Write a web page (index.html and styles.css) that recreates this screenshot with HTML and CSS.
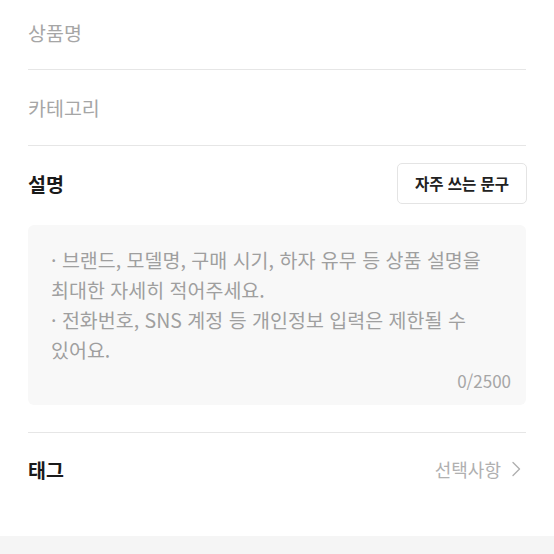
FILE: index.html
```html
<!DOCTYPE html>
<html lang="ko">

<head>
    <meta charset="UTF-8">
    <meta name="viewport" content="width=device-width, initial-scale=1.0">
    <title>상품 등록</title>
    <link rel="stylesheet" href="styles.css">
</head>

<body>
    <div class="form-container">
        <!-- 상품명 / 카테고리 -->
        <div class="field field-first">상품명</div>
        <div class="field">카테고리</div>

        <!-- 설명 -->
        <div class="desc-head">
            <span class="label">설명</span>
            <button type="button" class="phrase-btn">자주 쓰는 문구</button>
        </div>
        <div class="desc-box">
            <p class="desc-hint">· 브랜드, 모델명, 구매 시기, 하자 유무 등 상품 설명을<br>최대한 자세히 적어주세요.<br>· 전화번호, SNS 계정 등 개인정보 입력은 제한될 수<br>있어요.</p>
            <div class="counter">0/2500</div>
        </div>

        <!-- 태그 -->
        <div class="tag-row">
            <span class="label">태그</span>
            <span class="optional">선택사항
                <svg width="10" height="16" viewBox="0 0 10 16"><path d="M2 1.5l6.5 6.5-6.5 6.5" fill="none" stroke="#b0b0b0" stroke-width="1.4" stroke-linecap="round" stroke-linejoin="round"/></svg>
            </span>
        </div>
    </div>
    <div class="bottom-bar"></div>
</body>

</html>
```

FILE: styles.css
```css
/* 전체 */
body {
    font-family: "Noto Sans CJK KR", "Noto Sans", sans-serif;
    background-color: #ffffff;
    margin: 0;
    padding: 0;
}

.form-container {
    padding: 0 28px;
}

/* 입력 필드 */
.field {
    height: 76px;
    box-sizing: border-box;
    display: flex;
    align-items: center;
    font-size: 19.5px;
    color: #a6a6a6;
    border-bottom: 1px solid #e6e6e6;
}

.field-first {
    height: 70px;
    padding-bottom: 4px;
}

/* 설명 헤더 */
.desc-head {
    height: 74px;
    display: flex;
    align-items: center;
    justify-content: space-between;
}

.label {
    font-size: 19.5px;
    font-weight: 700;
    color: #1a1a1a;
}

.phrase-btn {
    font-family: inherit;
    width: 130px;
    height: 41px;
    margin-right: -1px;
    background-color: #ffffff;
    border: 1px solid #e4e4e4;
    border-radius: 5px;
    font-size: 15.5px;
    font-weight: 700;
    color: #222;
    cursor: pointer;
}

/* 설명 입력 박스 */
.desc-box {
    margin-top: 5px;
    height: 180px;
    box-sizing: border-box;
    padding: 20px 15px 0 23px;
    background-color: #f8f8f8;
    border-radius: 6px;
}

.desc-hint {
    margin: 0;
    font-size: 19.5px;
    line-height: 30px;
    color: #9f9f9f;
}

.counter {
    text-align: right;
    font-size: 17px;
    line-height: 24px;
    margin-top: 4px;
    color: #a6a6a6;
}

/* 태그 */
.tag-row {
    margin-top: 27px;
    height: 72px;
    border-top: 1px solid #e6e6e6;
    display: flex;
    align-items: center;
    justify-content: space-between;
}

.optional {
    display: flex;
    align-items: center;
    gap: 10px;
    font-size: 18px;
    color: #b0b0b0;
    margin-right: 5px;
}

.bottom-bar {
    margin-top: 31px;
    height: 30px;
    background-color: #f5f5f5;
}
```
